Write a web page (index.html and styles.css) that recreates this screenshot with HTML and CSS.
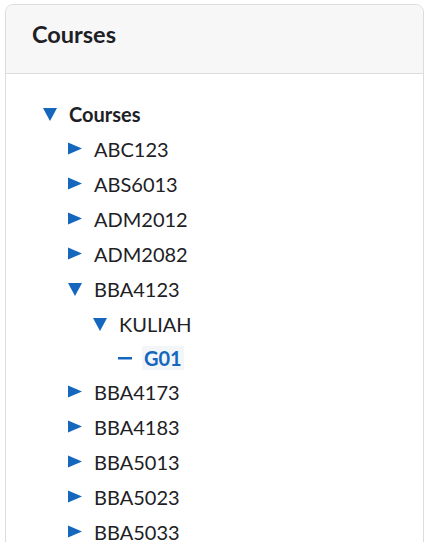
FILE: index.html
```html
<!DOCTYPE html>
<html>
<head>
<meta charset="utf-8">
<link rel="stylesheet" href="styles.css">
</head>
<body>
<div class="card">
  <div class="card-header"><h2 class="title">Courses</h2></div>
  <div class="card-body">
    <ul class="tree">
      <li><div class="row top"><svg class="tri" viewBox="0 0 14 14"><polygon points="0,1 14,1 7,14"/></svg><span>Courses</span></div>
        <ul class="tree sub">
          <li><div class="row"><svg class="tri" viewBox="0 0 14 14"><polygon points="0,0.5 14,6.5 0,12.5"/></svg><span>ABC123</span></div></li>
          <li><div class="row"><svg class="tri" viewBox="0 0 14 14"><polygon points="0,0.5 14,6.5 0,12.5"/></svg><span>ABS6013</span></div></li>
          <li><div class="row"><svg class="tri" viewBox="0 0 14 14"><polygon points="0,0.5 14,6.5 0,12.5"/></svg><span>ADM2012</span></div></li>
          <li><div class="row"><svg class="tri" viewBox="0 0 14 14"><polygon points="0,0.5 14,6.5 0,12.5"/></svg><span>ADM2082</span></div></li>
          <li><div class="row"><svg class="tri" viewBox="0 0 14 14"><polygon points="0,1 14,1 7,14"/></svg><span>BBA4123</span></div>
            <ul class="tree sub">
              <li><div class="row"><svg class="tri" viewBox="0 0 14 14"><polygon points="0,1 14,1 7,14"/></svg><span>KULIAH</span></div>
                <ul class="tree sub">
                  <li><div class="row leaf"><svg class="tri" viewBox="0 0 14 14"><rect x="0" y="6" width="14" height="2.5"/></svg><span class="active">G01</span></div></li>
                </ul>
              </li>
            </ul>
          </li>
          <li><div class="row"><svg class="tri" viewBox="0 0 14 14"><polygon points="0,0.5 14,6.5 0,12.5"/></svg><span>BBA4173</span></div></li>
          <li><div class="row"><svg class="tri" viewBox="0 0 14 14"><polygon points="0,0.5 14,6.5 0,12.5"/></svg><span>BBA4183</span></div></li>
          <li><div class="row"><svg class="tri" viewBox="0 0 14 14"><polygon points="0,0.5 14,6.5 0,12.5"/></svg><span>BBA5013</span></div></li>
          <li><div class="row"><svg class="tri" viewBox="0 0 14 14"><polygon points="0,0.5 14,6.5 0,12.5"/></svg><span>BBA5023</span></div></li>
          <li><div class="row"><svg class="tri" viewBox="0 0 14 14"><polygon points="0,0.5 14,6.5 0,12.5"/></svg><span>BBA5033</span></div></li>
          <li><div class="row"><svg class="tri" viewBox="0 0 14 14"><polygon points="0,0.5 14,6.5 0,12.5"/></svg><span>BBA5043</span></div></li>
        </ul>
      </li>
    </ul>
  </div>
</div>
</body>
</html>
```
FILE: styles.css
```css
html, body { margin: 0; padding: 0; background: #fff; }
body { font-family: Lato, "Liberation Sans", sans-serif; color: #1d2125; }
.card {
  margin: 4px 5px 0 5px;
  border: 1px solid #dcdcdc;
  border-radius: 8px;
  height: 600px;
  overflow: hidden;
}
.card-header {
  background: #f7f7f7;
  border-bottom: 1px solid #dcdcdc;
  height: 68px;
  padding-left: 26px;
  display: flex;
  align-items: center;
}
.title { margin: 0; font-size: 23.5px; font-weight: 700; color: #1d2125; position: relative; top: -5px; }
.card-body { padding: 22px 0 0 37px; }
.tree { list-style: none; margin: 0; padding: 0; }
.tree.sub { padding-left: 25px; }
.row { display: flex; align-items: center; height: 35px; font-size: 20px; gap: 12px; }
.row.top span { font-weight: 700; }
.tri { width: 14px; height: 14px; fill: #1467bd; flex: none; }
.active { color: #1467bd; font-weight: 700; background: #f3f6f9; padding: 0 2px; margin-left: -2px; }
.row.leaf { height: 33px; }
```
